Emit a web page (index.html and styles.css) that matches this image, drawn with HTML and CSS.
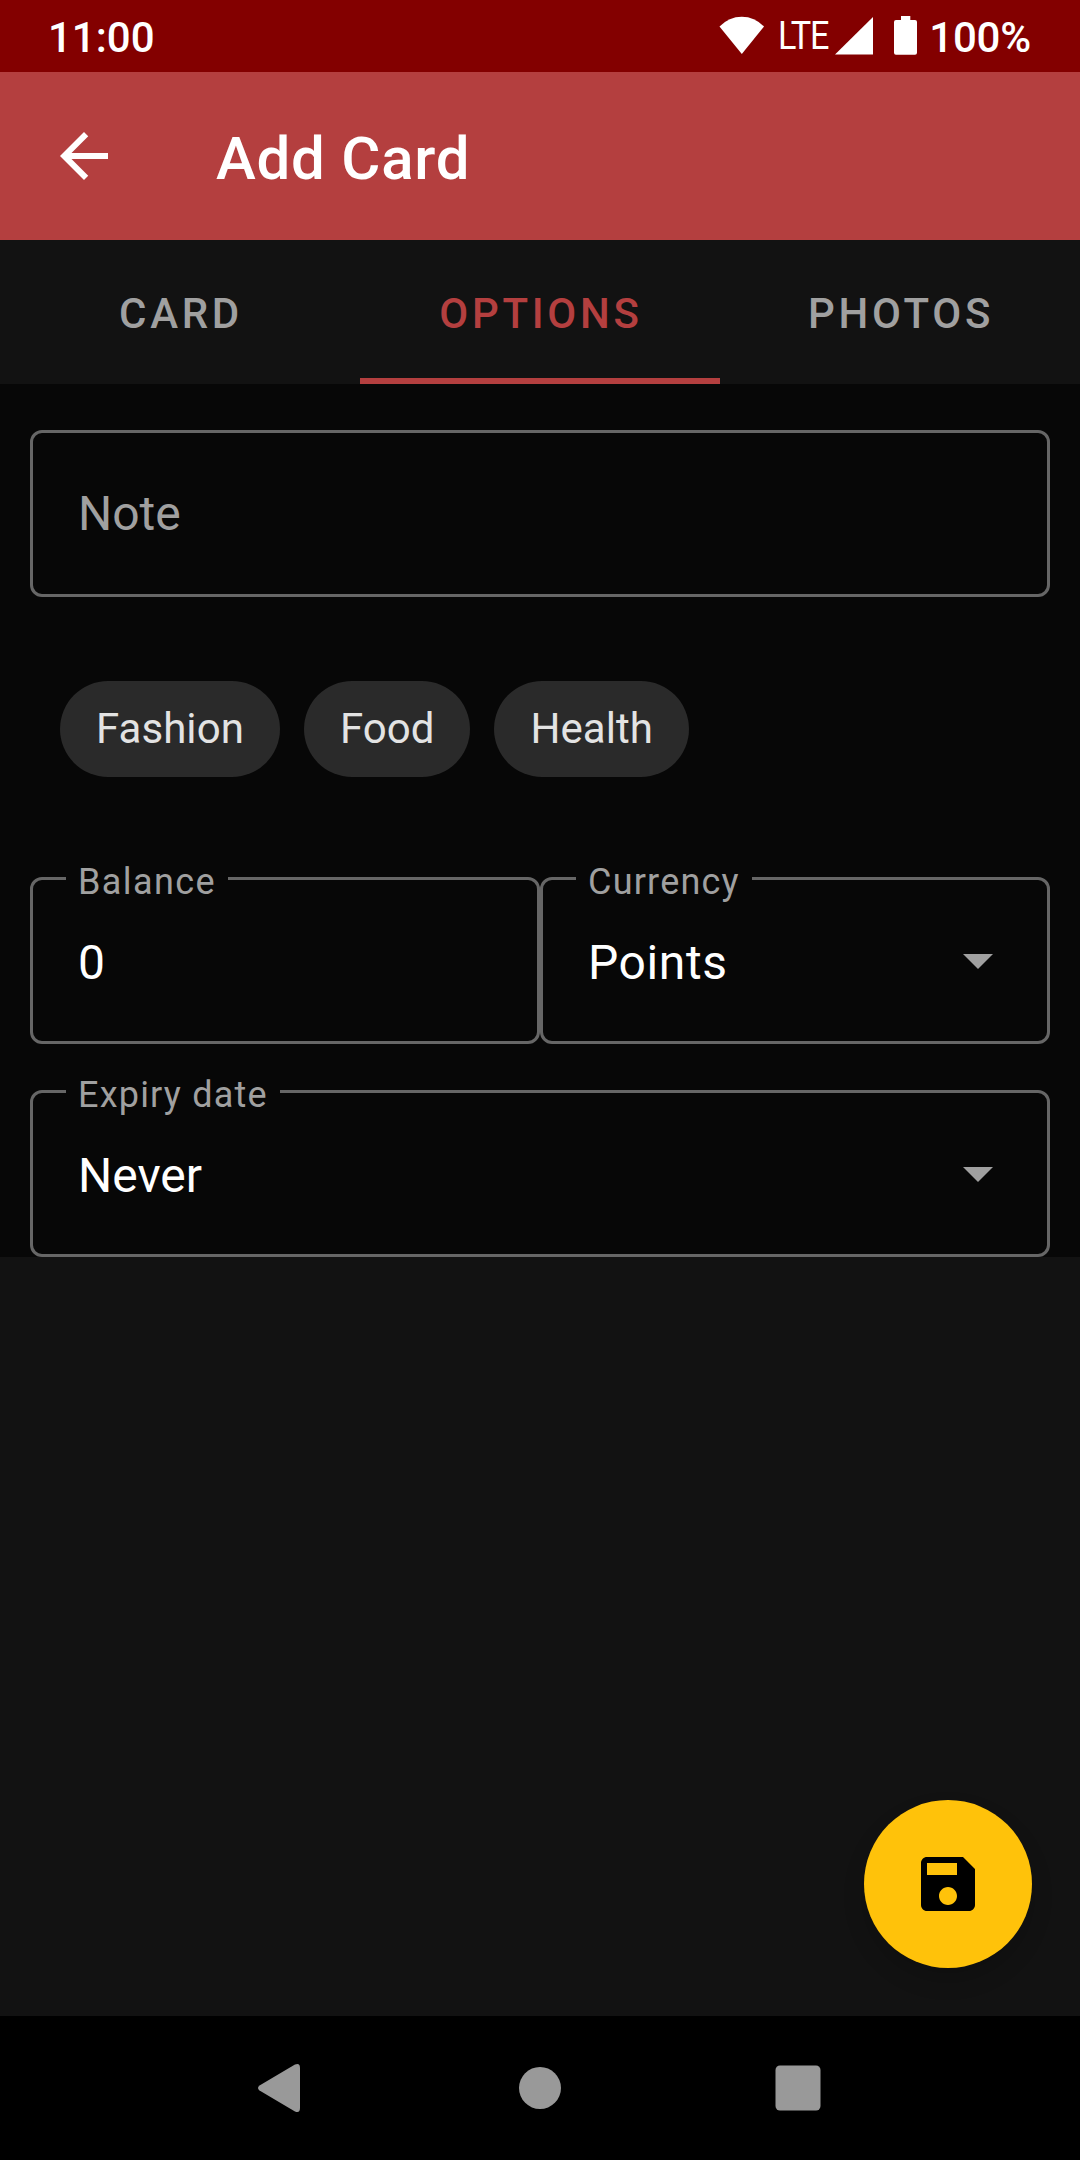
FILE: index.html
```html
<!DOCTYPE html>
<html lang="en">
<head>
<meta charset="utf-8">
<title>Add Card</title>
<link rel="stylesheet" href="styles.css">
</head>
<body>
<div class="screen">
  <header class="status">
    <span class="clock">11:00</span>
    <div class="indicators">
      <svg class="wifi" width="46" height="39" viewBox="0 0 46 39"><path d="M0.5 10.5Q10 0.7 22.8 0.7T45 10.5L22.8 38Z"/></svg>
      <span class="lte">LTE</span>
      <svg class="signal" width="38" height="38" viewBox="0 0 38 38"><path d="M38 0V37.5H0Z"/></svg>
      <svg class="battery" width="23" height="39" viewBox="0 0 23 39"><path d="M7 0h9.300v4H21a2 2 0 0 1 2 2v30.700a2 2 0 0 1-2 2H2a2 2 0 0 1-2-2V6a2 2 0 0 1 2-2h5Z"/></svg>
      <span class="percent">100%</span>
    </div>
  </header>
  <div class="appbar">
    <svg class="back" width="72" height="72" viewBox="0 0 24 24"><path d="M20 11H7.830l5.590-5.590L12 4l-8 8 8 8 1.410-1.410L7.830 13H20z"/></svg>
    <h1 class="title">Add Card</h1>
  </div>
  <nav class="tabs">
    <span class="tab">CARD</span>
    <span class="tab active">OPTIONS</span>
    <span class="tab">PHOTOS</span>
  </nav>
  <main class="form">
    <div class="field"><span class="hint">Note</span></div>
    <div class="chips">
      <span class="chip">Fashion</span>
      <span class="chip">Food</span>
      <span class="chip">Health</span>
    </div>
    <div class="row">
      <div class="field"><span class="label wide">Balance</span><span class="value">0</span></div>
      <div class="field"><span class="label">Currency</span><span class="value spaced">Points</span>
        <svg class="caret" width="30" height="15" viewBox="0 0 30 15"><path d="M0 0h30L15 15z"/></svg></div>
    </div>
    <div class="field"><span class="label">Expiry date</span><span class="value">Never</span>
      <svg class="caret" width="30" height="15" viewBox="0 0 30 15"><path d="M0 0h30L15 15z"/></svg></div>
  </main>
  <div class="rest"></div>
  <button class="fab" aria-label="Save">
    <svg width="72" height="72" viewBox="0 0 24 24"><path d="M17 3H5c-1.110 0-2 .9-2 2v14c0 1.100.89 2 2 2h14c1.100 0 2-.9 2-2V7l-4-4zm-5 16c-1.660 0-3-1.340-3-3s1.340-3 3-3 3 1.340 3 3-1.340 3-3 3zm3-10H5V5h10v4z"/></svg>
  </button>
  <footer class="navbar">
    <svg width="42" height="48" viewBox="0 0 42 48"><path d="M37 .6Q42-1.500 42 4V44Q42 49.500 37 47.400L1.500 26.500Q-1.500 24 1.500 21.500Z"/></svg>
    <svg class="home" width="42" height="42" viewBox="0 0 42 42"><circle cx="21" cy="21" r="21"/></svg>
    <svg width="46" height="46" viewBox="0 0 46 46"><rect x=".5" y=".5" width="45" height="45" rx="4.500"/></svg>
  </footer>
</div>
</body>
</html>
```
FILE: styles.css
```css
* { box-sizing: border-box; }
body { margin: 0; background: #121212; font-family: Roboto, "Noto Sans", sans-serif; }
svg { display: block; flex: none; }
.screen { position: relative; width: 1080px; height: 2160px; display: flex; flex-direction: column; overflow: hidden; color: #fff; }
.status { height: 72px; padding: 2px 49px 0 48px; background: #830000; display: flex; justify-content: space-between; align-items: center; font-size: 42px; font-weight: 500; }
.status svg { fill: #fff; margin-bottom: 3px; }
.indicators { display: flex; align-items: center; }
.wifi { margin-right: 13px; }
.lte { width: 57px; margin-bottom: 2px; font-size: 38px; font-weight: 400; letter-spacing: -1.2px; white-space: nowrap; transform: scaleX(.9); transform-origin: left; }
.signal { margin-right: 21px; }
.battery { margin-right: 12px; }
.percent { letter-spacing: -0.2px; }
.appbar { height: 168px; padding: 0 48px; background: #b43f3f; display: flex; align-items: center; gap: 96px; }
.back { fill: #fff; }
.title { margin: 5px 0 0; font-size: 60px; font-weight: 500; line-height: 72px; letter-spacing: 0.75px; }
.tabs { height: 144px; display: grid; grid-template-columns: repeat(3, 1fr); background: #121212; }
.tab { display: flex; align-items: center; justify-content: center; padding: 9px 0 0 2px; border-bottom: 6px solid transparent; font-size: 42px; font-weight: 500; letter-spacing: 3.7px; color: #a0a0a0; }
.tab.active { color: #b43f3f; border-color: #b43f3f; }
.form { padding: 46px 30px 0; background: #070707; }
.field { position: relative; height: 167px; padding: 4px 54px 0 45px; border: 3px solid #666; border-radius: 12px; display: flex; align-items: center; justify-content: space-between; font-size: 48px; }
.hint { margin-top: -4px; color: #a0a0a0; }
.spaced { letter-spacing: 0.6px; }
.caret { fill: #a0a0a0; margin-top: -2px; }
.label { position: absolute; left: 33px; top: -19px; padding: 0 12px; background: #070707; font-size: 36px; line-height: 42px; letter-spacing: 1.2px; color: #a0a0a0; white-space: nowrap; }
.label.wide { letter-spacing: 1.4px; }
.chips { display: flex; gap: 24px; padding: 84px 30px 100px; }
.chip { height: 96px; padding: 0 36px; border-radius: 48px; background: #2a2a2a; color: #e3e3e3; font-size: 42px; line-height: 95px; letter-spacing: 0.05px; }
.row { display: grid; grid-template-columns: 1fr 1fr; margin-bottom: 46px; }
.rest { flex: 1; background: #121212; }
.fab { position: absolute; left: 864px; top: 1800px; width: 168px; height: 168px; padding: 0; border: 0; border-radius: 50%; background: #ffc20a; display: flex; align-items: center; justify-content: center; box-shadow: 0 12px 22px rgba(0,0,0,.16); }
.navbar { height: 144px; padding: 0 259px 0 258px; background: #000; display: flex; align-items: center; justify-content: space-between; }
.navbar svg { fill: #999; }
.navbar .home { margin-left: 5px; }
```
